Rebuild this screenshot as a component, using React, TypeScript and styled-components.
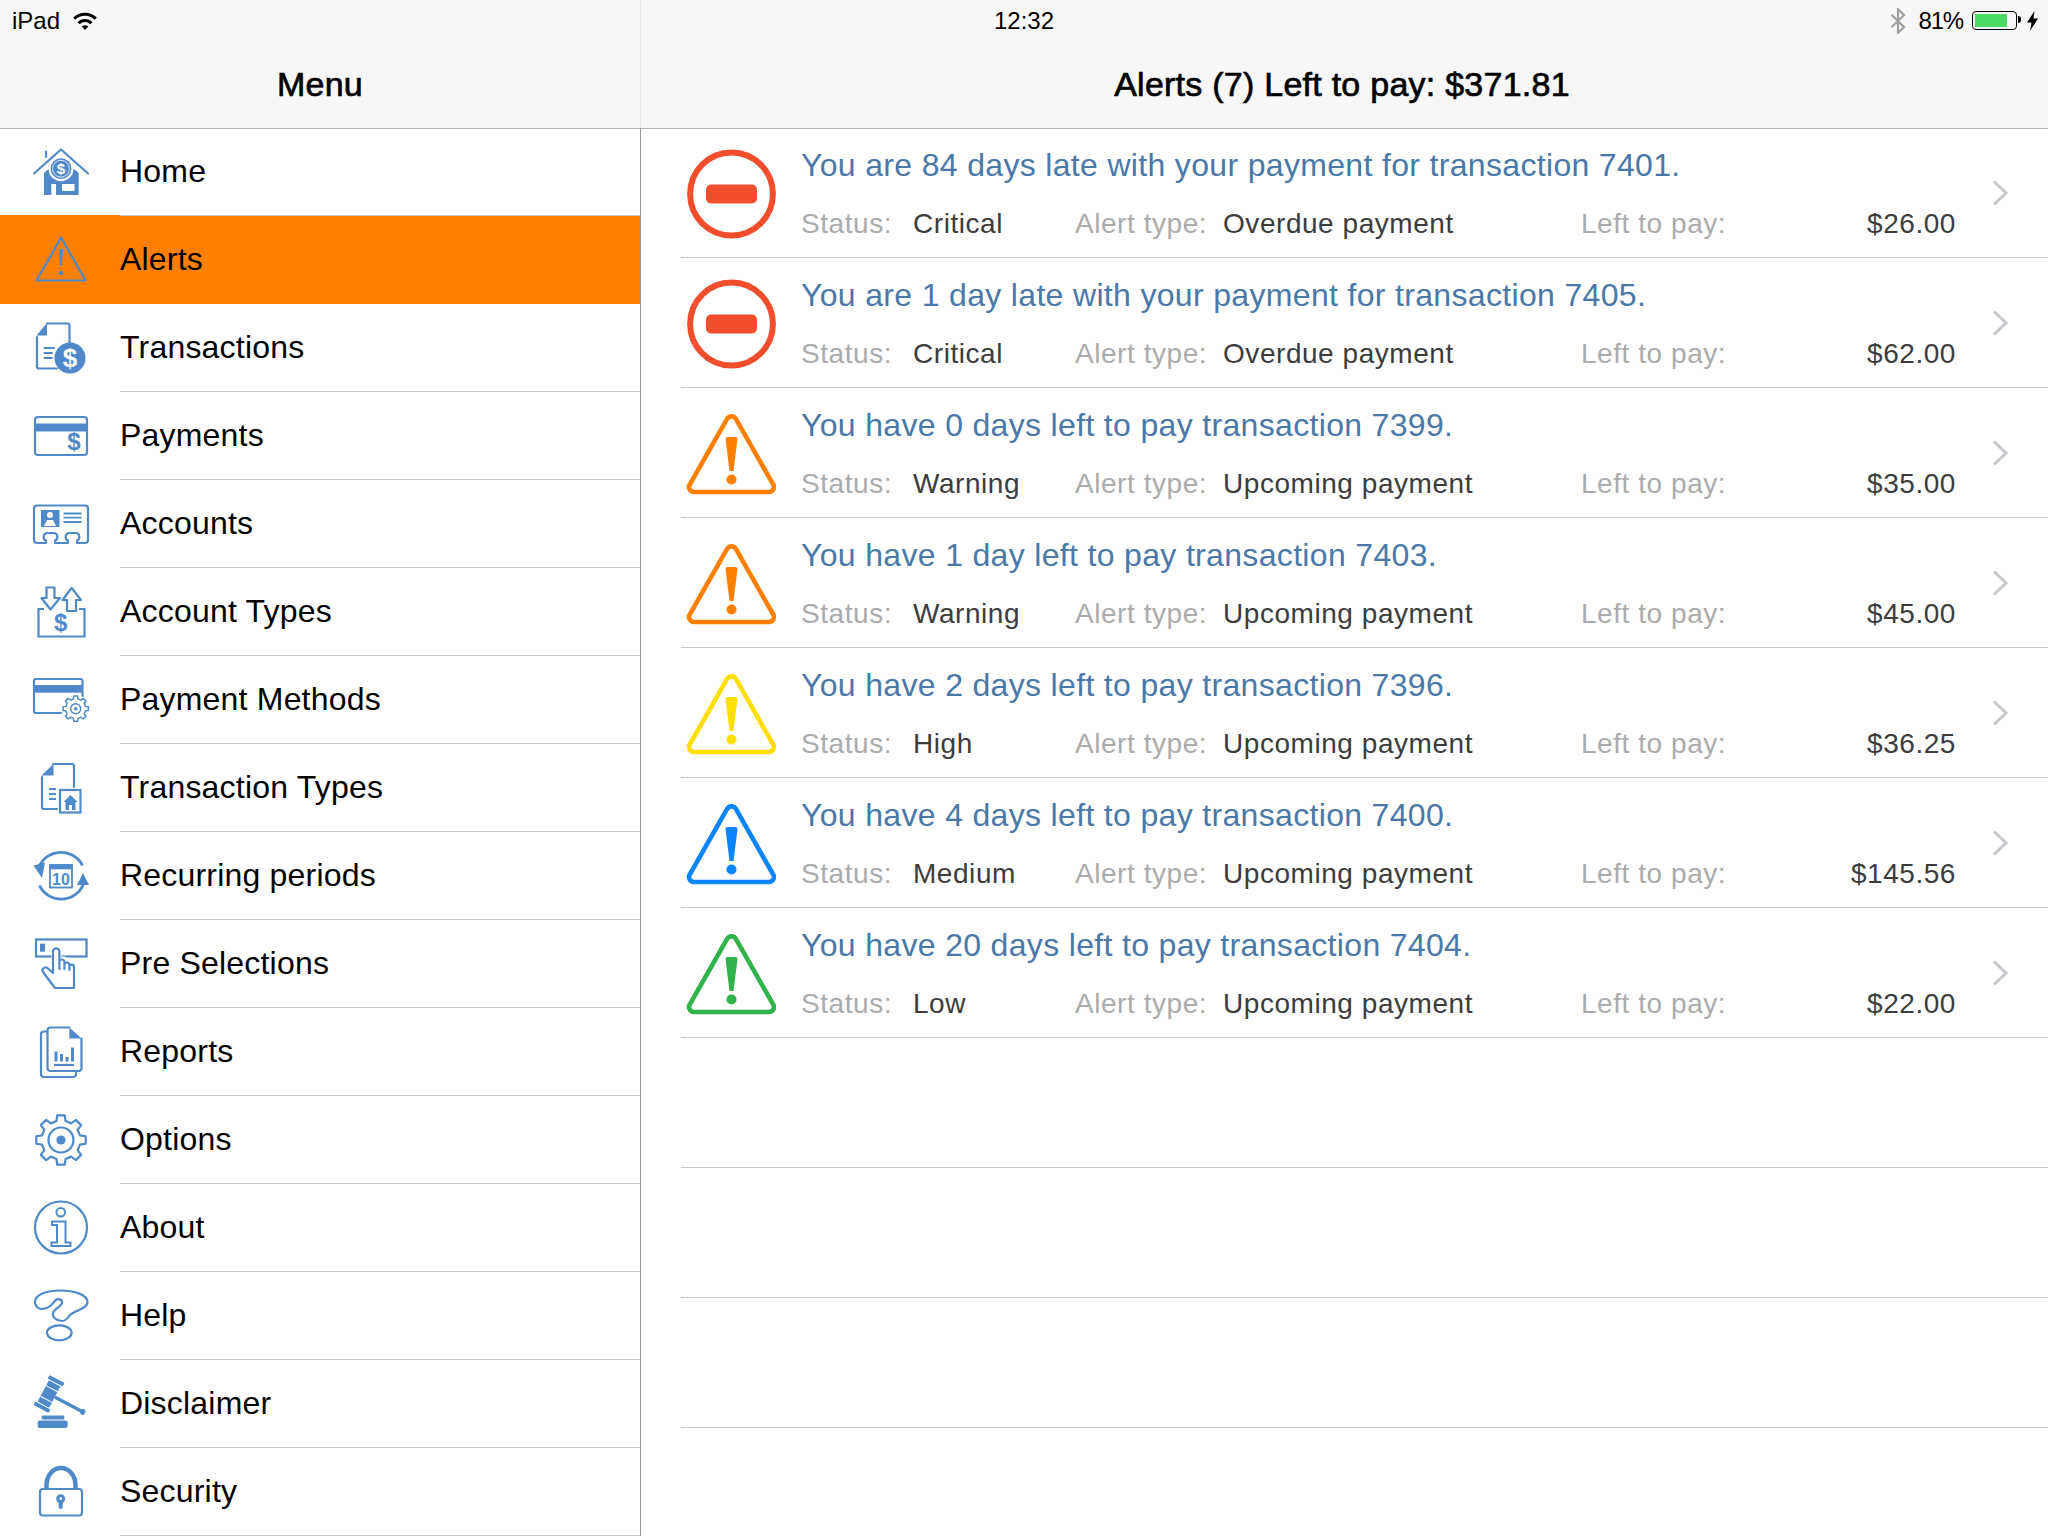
import React from 'react';
import styled, { createGlobalStyle } from 'styled-components';

const BLUE = '#4f89c9';

const GlobalStyle = createGlobalStyle`
	html, body {
		margin: 0;
		padding: 0;
		background: #fff;
		overflow: hidden;
	}
	body {
		font-family: "Liberation Sans", Arial, sans-serif;
	}
`;

const Page = styled.div`
	display: flex;
	width: 2048px;
	height: 1536px;
	overflow: hidden;
`;
const Sidebar = styled.div`
	width: 641px;
	flex: none;
	display: flex;
	flex-direction: column;
`;
const Main = styled.div`
	flex: 1;
	display: flex;
	flex-direction: column;
	min-width: 0;
`;
const Header = styled.header<{ $divider?: boolean }>`
	height: 129px;
	box-sizing: border-box;
	flex: none;
	background: #f7f7f7;
	border-bottom: 1px solid #b2b2b2;
	border-right: ${props => (props.$divider ? '1px solid #eaeaea' : 'none')};
`;
const StatusBar = styled.div`
	height: 41px;
	display: flex;
	align-items: center;
	font-size: 24px;
	color: #000;
`;
const Carrier = styled.span`
	margin-left: 12px;
	margin-right: 13px;
`;
const Clock = styled.span`
	margin-left: 353px;
`;
const StatusRight = styled.div`
	margin-left: auto;
	margin-right: 10px;
	display: flex;
	align-items: center;
`;
const Percent = styled.span`
	margin: 0 9px 0 13px;
	letter-spacing: -1.2px;
`;
const Battery = styled.div`
	position: relative;
	width: 45px;
	height: 19px;
	box-sizing: border-box;
	border: 1px solid #000;
	border-radius: 4px;
	padding: 2px;
	margin-right: 10px;
	&::after {
		content: '';
		position: absolute;
		right: -5px;
		top: 4px;
		width: 3px;
		height: 7px;
		background: #000;
		border-radius: 0 3px 3px 0;
	}
`;
const BatteryFill = styled.div`
	height: 100%;
	background: #4cd964;
`;
const NavTitle = styled.h1`
	margin: 23px 0 0;
	height: 40px;
	line-height: 40px;
	font-size: 34px;
	font-weight: 400;
	letter-spacing: 0.25px;
	-webkit-text-stroke: 0.7px #000;
	text-align: center;
	color: #000;
`;
const MainTitle = styled(NavTitle)`
	padding-right: 5px;
`;
const Menu = styled.nav`
	flex: 1;
	margin-top: -1px;
	border-right: 1px solid #97979b;
`;
const MenuRow = styled.div<{ $active?: boolean }>`
	display: flex;
	height: ${props => (props.$active ? '89px' : '88px')};
	margin-top: ${props => (props.$active ? '-1px' : '0')};
	padding-left: 33px;
	box-sizing: border-box;
	background: ${props => (props.$active ? '#ff7f00' : 'transparent')};
`;
const MenuLabel = styled.div<{ $active?: boolean }>`
	flex: 1;
	margin-left: 31px;
	display: flex;
	align-items: center;
	font-size: 32px;
	letter-spacing: 0.2px;
	color: #000;
	border-bottom: 1px solid ${props => (props.$active ? 'transparent' : '#c8c8c8')};
`;
const MenuIconBox = styled.div`
	width: 56px;
	flex: none;
	display: flex;
	align-items: center;
`;
const NavSvg = styled.svg`
	display: block;
	width: 56px;
	height: 56px;
	overflow: visible;
	margin-bottom: 1px;
`;
const AlertList = styled.div`
	flex: 1;
	margin-top: -1px;
	margin-left: 40px;
`;
const AlertRow = styled.div`
	height: 130px;
	box-sizing: border-box;
	border-bottom: 1px solid #c8c7cc;
	display: flex;
`;
const LevelIcon = styled.svg`
	width: 90px;
	height: 90px;
	flex: none;
	margin: 21px 25px 0 5px;
	display: block;
`;
const AlertBody = styled.div`
	width: 1155px;
	flex: none;
	padding-top: 19px;
	display: flex;
	flex-direction: column;
	gap: 24px;
`;
const AlertTitle = styled.div`
	font-size: 32px;
	line-height: 36px;
	letter-spacing: 0.33px;
	color: #4a78a8;
	white-space: nowrap;
`;
const AlertDetails = styled.div`
	display: grid;
	grid-template-columns: 112px 162px 148px 358px 1fr auto;
	font-size: 28px;
	line-height: 34px;
	letter-spacing: 0.55px;
	white-space: nowrap;
`;
const FieldName = styled.span`
	color: #ababab;
`;
const FieldValue = styled.span`
	color: #3c3c3c;
`;
const Chevron = styled.svg`
	width: 16px;
	height: 26px;
	flex: none;
	margin: 52px 0 0 36px;
`;

const Dollar = ({ x, y, size, fill = BLUE }: { x: number; y: number; size: number; fill?: string }) => (
	<text x={x} y={y} fontSize={size} fontWeight="700" textAnchor="middle" fill={fill} fontFamily="Liberation Sans, sans-serif">$</text>
);

// outline of a cog wheel with n teeth
const gearPath = (cx: number, cy: number, outer: number, inner: number, teeth: number) => {
	const pts: string[] = [];
	const step = (Math.PI * 2) / teeth;
	for (let i = 0; i < teeth; i++) {
		const a = i * step - Math.PI / 2;
		const spots: [number, number][] = [
			[inner, a - step * 0.3],
			[outer, a - step * 0.19],
			[outer, a + step * 0.19],
			[inner, a + step * 0.3],
		];
		spots.forEach(([r, t]) => pts.push(`${(cx + r * Math.cos(t)).toFixed(2)} ${(cy + r * Math.sin(t)).toFixed(2)}`));
	}
	return `M${pts.join('L')}Z`;
};

const line = { fill: 'none', stroke: BLUE, strokeWidth: 2.2, strokeLinejoin: 'round' as const, strokeLinecap: 'round' as const };

const HomeIcon = () => (
	<NavSvg viewBox="0 0 56 56">
		<path d="M11 29L28 14L45.7 29V51H23V40H18.3V51H11Z" fill={BLUE} />
		<rect x="29" y="40" width="12.5" height="7" fill="#fff" />
		<path d="M1 29.5L28 5.5L55 29.5M13 13V7.5" {...line} />
		<circle cx="28" cy="24.7" r="12.5" fill="#fff" />
		<circle cx="28" cy="24.7" r="10.4" fill={BLUE} />
		<circle cx="28" cy="24.7" r="8.4" fill="none" stroke="#fff" strokeWidth="0.8" />
		<Dollar x={28} y={30} size={15} fill="#fff" />
	</NavSvg>
);
const AlertMenuIcon = () => (
	<NavSvg viewBox="0 0 56 56">
		<path d="M28 6.5L52.5 49.5H3.5Z" {...line} />
		<path d="M26 18H30L28.8 35H27.2Z" fill={BLUE} />
		<circle cx="28" cy="42" r="2.3" fill={BLUE} />
	</NavSvg>
);
const TransactionsIcon = () => (
	<NavSvg viewBox="0 0 56 56">
		<path d="M14 3.5H34.5a2 2 0 0 1 2 2V24M24 48.5H6a2 2 0 0 1-2-2V17" {...line} />
		<path d="M3.5 15.5L14 3V15.5Z" fill={BLUE} />
		<path d="M11.5 28H21M11.5 33H19M11.5 38H19" {...line} strokeWidth={2} />
		<circle cx="37" cy="38" r="15.5" fill={BLUE} />
		<Dollar x={37} y={47} size={26} fill="#fff" />
	</NavSvg>
);
const PaymentsIcon = () => (
	<NavSvg viewBox="0 0 56 56">
		<rect x="2" y="9" width="52" height="38" rx="3" {...line} />
		<rect x="2" y="15.5" width="52" height="8" fill={BLUE} />
		<Dollar x={41} y={42} size={24} />
	</NavSvg>
);
const AccountsIcon = () => (
	<NavSvg viewBox="0 0 56 56">
		<path d="M4 9.5H52a3 3 0 0 1 3 3V44a3 3 0 0 1-3 3H44V44.5C47.5 43 47 37 42.5 37H36.5C32 37 31.5 43 35 44.5V47H22V44.5C25.5 43 25 37 20.5 37H14.5C10 37 9.5 43 13 44.5V47H4a3 3 0 0 1-3-3V12.5a3 3 0 0 1 3-3Z" {...line} />
		<rect x="8" y="14" width="18.5" height="17" fill={BLUE} />
		<circle cx="17" cy="19" r="3" fill="#fff" />
		<path d="M11 30L14 24H20L23 30Z" fill="#fff" />
		<path d="M30.5 17.5H48.5M30.5 21.7H48.5M30.5 26H48.5" {...line} strokeLinecap="butt" strokeWidth={1.8} />
	</NavSvg>
);
const AccountTypesIcon = () => (
	<NavSvg viewBox="0 0 56 56">
		<path d="M13.5 3.5H21.5V14H27L17.5 25.5L8.5 14H13.5Z" {...line} />
		<path d="M38.7 4L48 16H43V27H34V16H29.5Z" {...line} />
		<path d="M11 25H5.5V52.5H51.5V25H46" {...line} strokeLinejoin="miter" strokeLinecap="butt" />
		<Dollar x={27.7} y={46.5} size={24} />
	</NavSvg>
);
const PaymentMethodsIcon = () => (
	<NavSvg viewBox="0 0 56 56">
		<path d="M28 41H3a2 2 0 0 1-2-2V9a2 2 0 0 1 2-2H47.5a2 2 0 0 1 2 2V24" {...line} />
		<rect x="1" y="13" width="48.5" height="7.7" fill={BLUE} />
		<path d={gearPath(42.7, 36.7, 12.8, 10, 8)} fill="#fff" stroke={BLUE} strokeWidth="1.5" strokeLinejoin="round" />
		<circle cx="42.7" cy="36.7" r="5" fill="none" stroke={BLUE} strokeWidth="1.5" />
		<circle cx="42.7" cy="36.7" r="1.8" fill={BLUE} />
	</NavSvg>
);
const TransactionTypesIcon = () => (
	<NavSvg viewBox="0 0 56 56">
		<path d="M20 4H39a2 2 0 0 1 2 2V27M24 49H11a2 2 0 0 1-2-2V17" {...line} />
		<path d="M8.5 15.5L20.5 4V15.5Z" fill={BLUE} />
		<path d="M16 29H23M16 34H23M16 39H23" {...line} strokeWidth={2} strokeLinecap="butt" />
		<rect x="27" y="30" width="20.5" height="22.5" fill="#fff" stroke={BLUE} strokeWidth="2.2" />
		<path d="M37.5 35L44.5 42H42.5V50H32.5V42H30.5Z" fill={BLUE} />
		<rect x="36" y="45" width="3" height="5" fill="#fff" />
	</NavSvg>
);
const RecurringIcon = () => (
	<NavSvg viewBox="0 0 56 56">
		<path d="M6 19A24 24 0 0 1 49 16.5M7 38.5A24 24 0 0 0 50.5 36" fill="none" stroke={BLUE} strokeWidth="2.8" strokeLinecap="round" />
		<path d="M0.5 17.5L12 14.5L9 30Z" fill={BLUE} />
		<path d="M50 25L56 37H44Z" fill={BLUE} />
		<rect x="17" y="17" width="22" height="22.5" fill="none" stroke={BLUE} strokeWidth="1.8" />
		<rect x="16.5" y="16.3" width="23" height="5" fill={BLUE} />
		<text x="28" y="37" fontSize="16" fontWeight="700" textAnchor="middle" fill={BLUE} fontFamily="Liberation Sans, sans-serif">10</text>
	</NavSvg>
);
const PreSelectionsIcon = () => (
	<NavSvg viewBox="0 0 56 56">
		<rect x="3" y="3.5" width="50.5" height="17" fill="none" stroke={BLUE} strokeWidth="2.2" />
		<rect x="7" y="7.7" width="5" height="8" fill={BLUE} />
		<path d="M20 37V15.5a3.2 3.2 0 0 1 6.4 0V22H31.4L36.4 26H41V52H22L10 36C8 33 12 30 15 32.5L20 37Z" fill="#fff" stroke="#fff" strokeWidth="3" />
		<path d="M26.4 30V26a2.5 2.5 0 0 1 5 0V33M31.4 29a2.5 2.5 0 0 1 5 0V34M36.4 31a2.3 2.3 0 0 1 4.6 0V52H22L10 36C8 33 12 30 15 32.5L20 37V15.5a3.2 3.2 0 0 1 6.4 0V33" {...line} />
	</NavSvg>
);
const ReportsIcon = () => (
	<NavSvg viewBox="0 0 56 56">
		<path d="M14.5 7.5H11a3 3 0 0 0-3 3V50a3 3 0 0 0 3 3H40a3 3 0 0 0 3-3V48" {...line} />
		<path d="M36.5 3.5H17.5a3 3 0 0 0-3 3V44a3 3 0 0 0 3 3H45.5a3 3 0 0 0 3-3V14.5" {...line} />
		<path d="M36.3 3.5L48.5 14.5H36.3Z" fill={BLUE} />
		<path d="M21 41H41" {...line} strokeLinecap="butt" />
		<rect x="21.5" y="27.5" width="3" height="10" fill={BLUE} />
		<rect x="27" y="30" width="3" height="7.5" fill={BLUE} />
		<rect x="32.5" y="33" width="3" height="4.5" fill={BLUE} />
		<rect x="38" y="23.5" width="3" height="14" fill={BLUE} />
	</NavSvg>
);
const OptionsIcon = () => (
	<NavSvg viewBox="0 0 56 56">
		<path d={gearPath(28, 28, 25, 19.5, 8)} {...line} />
		<circle cx="28" cy="28" r="12.5" fill="none" stroke={BLUE} strokeWidth="2.2" />
		<circle cx="28" cy="28" r="4.6" fill={BLUE} />
	</NavSvg>
);
const AboutIcon = () => (
	<NavSvg viewBox="0 0 56 56">
		<circle cx="28" cy="27.5" r="26" {...line} />
		<circle cx="27.7" cy="12.2" r="4.3" fill="none" stroke={BLUE} strokeWidth="2" />
		<path d="M19 21.5H32.5V42.5H37.5V46H18.5V42.5H24V25H19Z" fill="none" stroke={BLUE} strokeWidth="2" />
	</NavSvg>
);
const HelpIcon = () => (
	<NavSvg viewBox="0 0 56 56">
		<path d="M2 14C2 6 15 2.5 27 2.5C42 2.5 54.5 7 54.5 14C54.5 21 42 22 37 27C35 30 33 33 29 33C24 33 18 29 20.5 24C22 20 29 19 29 14C29 11 25 10.5 23 12C20 14 18 21 9 21C5 21 2 18 2 14Z" {...line} />
		<ellipse cx="26.3" cy="44.8" rx="12.3" ry="7.5" {...line} />
	</NavSvg>
);
const DisclaimerIcon = () => (
	<NavSvg viewBox="0 0 56 56">
		<g transform="translate(16 18) rotate(28)">
			<rect x="-8.5" y="-17" width="17" height="4" rx="1" fill={BLUE} />
			<rect x="-6.5" y="-12" width="13" height="24" fill={BLUE} />
			<rect x="-8.5" y="13" width="17" height="4" rx="1" fill={BLUE} />
			<path d="M-6.5 -6H6.5M-6.5 6H6.5" stroke="#fff" strokeWidth="1" />
			<path d="M8 0H37" stroke={BLUE} strokeWidth="3.4" strokeLinecap="round" />
			<rect x="36" y="-3" width="4.5" height="6" rx="2" fill={BLUE} />
		</g>
		<rect x="8.7" y="39.5" width="22.6" height="4" rx="1" fill={BLUE} />
		<rect x="4.7" y="44.5" width="30" height="7.5" rx="2" fill={BLUE} />
	</NavSvg>
);
const SecurityIcon = () => (
	<NavSvg viewBox="0 0 56 56">
		<path d="M13.5 24V21a14.5 17 0 0 1 29 0V24" fill="none" stroke={BLUE} strokeWidth="4.5" />
		<rect x="7" y="25" width="42" height="26.5" rx="3" {...line} />
		<circle cx="27.7" cy="34.8" r="4.5" fill={BLUE} />
		<circle cx="27.7" cy="34.5" r="1.5" fill="#fff" />
		<rect x="25.7" y="36" width="4" height="9" rx="2" fill={BLUE} />
	</NavSvg>
);

const WifiIcon = () => (
	<svg width="24" height="18" viewBox="0 0 24 18">
		<path d="M1.2 6.7A15.5 15.5 0 0 1 22.8 6.7M5.6 11.2A9 9 0 0 1 18.4 11.2" fill="none" stroke="#000" strokeWidth="3" />
		<path d="M8.6 14.6Q12 12 15.4 14.6L12 18Z" fill="#000" />
	</svg>
);
const BluetoothIcon = () => (
	<svg width="16" height="26" viewBox="0 0 16 26">
		<path d="M1.5 6.8L14 19L8 25V1L14 7L1.5 19.2" fill="none" stroke="#a0a0a0" strokeWidth="2.2" />
	</svg>
);
const BoltIcon = () => (
	<svg width="11" height="20" viewBox="0 0 11 20">
		<path d="M7.5 0L0 11.5H4.5L3 20L11 7.5H6.5Z" fill="#000" />
	</svg>
);

const StopIcon = ({ color }: { color: string }) => (
	<LevelIcon viewBox="0 0 90 90">
		<circle cx="45.5" cy="45" r="41.4" fill="none" stroke={color} strokeWidth="6" />
		<rect x="20" y="35.5" width="51" height="19" rx="5" fill={color} />
	</LevelIcon>
);
const WarnIcon = ({ color }: { color: string }) => (
	<LevelIcon viewBox="0 0 90 90">
		<g transform="translate(0.5 0)">
			<path d="M40.6 10a5 5 0 0 1 8.8 0L86.4 75a5 5 0 0 1-4.4 8H8a5 5 0 0 1-4.4-8Z" fill="none" stroke={color} strokeWidth="4.6" />
			<path d="M39 30Q39 28 41 28H49Q51 28 51 30L47 62H43Z" fill={color} />
			<circle cx="45" cy="70.5" r="5" fill={color} />
		</g>
	</LevelIcon>
);

const menuItems = [
	{ label: 'Home', Icon: HomeIcon },
	{ label: 'Alerts', Icon: AlertMenuIcon, active: true },
	{ label: 'Transactions', Icon: TransactionsIcon },
	{ label: 'Payments', Icon: PaymentsIcon },
	{ label: 'Accounts', Icon: AccountsIcon },
	{ label: 'Account Types', Icon: AccountTypesIcon },
	{ label: 'Payment Methods', Icon: PaymentMethodsIcon },
	{ label: 'Transaction Types', Icon: TransactionTypesIcon },
	{ label: 'Recurring periods', Icon: RecurringIcon },
	{ label: 'Pre Selections', Icon: PreSelectionsIcon },
	{ label: 'Reports', Icon: ReportsIcon },
	{ label: 'Options', Icon: OptionsIcon },
	{ label: 'About', Icon: AboutIcon },
	{ label: 'Help', Icon: HelpIcon },
	{ label: 'Disclaimer', Icon: DisclaimerIcon },
	{ label: 'Security', Icon: SecurityIcon },
];

const alerts = [
	{ title: 'You are 84 days late with your payment for transaction 7401.', status: 'Critical', type: 'Overdue payment', left: '$26.00', color: '#f04e2c', stop: true },
	{ title: 'You are 1 day late with your payment for transaction 7405.', status: 'Critical', type: 'Overdue payment', left: '$62.00', color: '#f04e2c', stop: true },
	{ title: 'You have 0 days left to pay transaction 7399.', status: 'Warning', type: 'Upcoming payment', left: '$35.00', color: '#ff8000' },
	{ title: 'You have 1 day left to pay transaction 7403.', status: 'Warning', type: 'Upcoming payment', left: '$45.00', color: '#ff8000' },
	{ title: 'You have 2 days left to pay transaction 7396.', status: 'High', type: 'Upcoming payment', left: '$36.25', color: '#ffdf00' },
	{ title: 'You have 4 days left to pay transaction 7400.', status: 'Medium', type: 'Upcoming payment', left: '$145.56', color: '#0a84ff' },
	{ title: 'You have 20 days left to pay transaction 7404.', status: 'Low', type: 'Upcoming payment', left: '$22.00', color: '#2fb34a' },
];

const App = () => {
	return (
		<Page>
			<GlobalStyle />
			<Sidebar>
				<Header $divider>
					<StatusBar>
						<Carrier>iPad</Carrier>
						<WifiIcon />
					</StatusBar>
					<NavTitle>Menu</NavTitle>
				</Header>
				<Menu>
					{menuItems.map(({ label, Icon, active }) => (
						<MenuRow key={label} $active={active}>
							<MenuIconBox><Icon /></MenuIconBox>
							<MenuLabel $active={active}>{label}</MenuLabel>
						</MenuRow>
					))}
				</Menu>
			</Sidebar>
			<Main>
				<Header>
					<StatusBar>
						<Clock>12:32</Clock>
						<StatusRight>
							<BluetoothIcon />
							<Percent>81%</Percent>
							<Battery><BatteryFill style={{ width: '81%' }} /></Battery>
							<BoltIcon />
						</StatusRight>
					</StatusBar>
					<MainTitle>Alerts (7) Left to pay: $371.81</MainTitle>
				</Header>
				<AlertList>
					{alerts.map(alert => (
						<AlertRow key={alert.title}>
							{alert.stop ? <StopIcon color={alert.color} /> : <WarnIcon color={alert.color} />}
							<AlertBody>
								<AlertTitle>{alert.title}</AlertTitle>
								<AlertDetails>
									<FieldName>Status:</FieldName>
									<FieldValue>{alert.status}</FieldValue>
									<FieldName>Alert type:</FieldName>
									<FieldValue>{alert.type}</FieldValue>
									<FieldName>Left to pay:</FieldName>
									<FieldValue>{alert.left}</FieldValue>
								</AlertDetails>
							</AlertBody>
							<Chevron viewBox="0 0 16 26">
								<path d="M2 1.5L14 13L2 24.5" fill="none" stroke="#c7c7cc" strokeWidth="3" />
							</Chevron>
						</AlertRow>
					))}
					<AlertRow />
					<AlertRow />
					<AlertRow />
				</AlertList>
			</Main>
		</Page>
	);
};

export default App;
